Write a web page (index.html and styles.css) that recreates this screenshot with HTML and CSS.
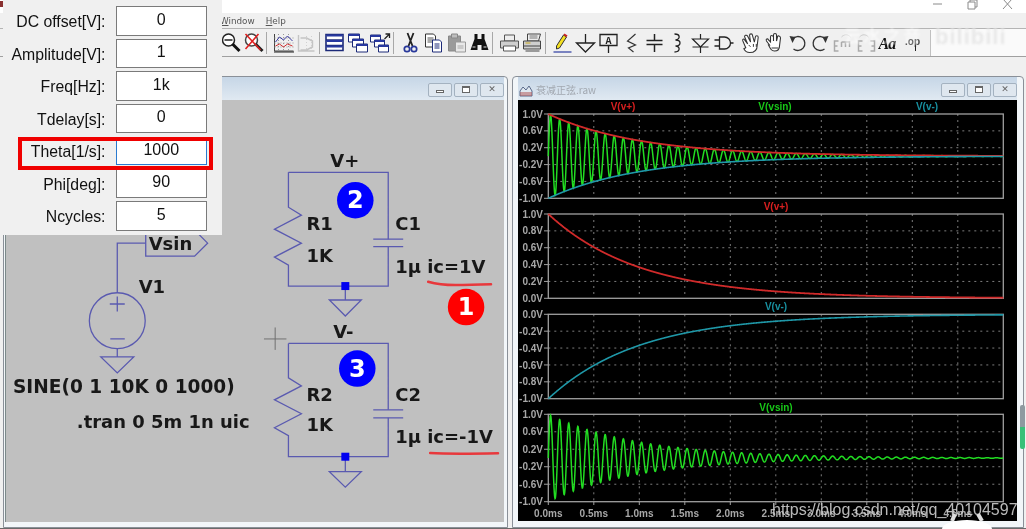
FILE: index.html
```html
<!DOCTYPE html>
<html lang="en">
<head>
<meta charset="utf-8">
<title>LTspice</title>
<link rel="stylesheet" href="styles.css">
</head>
<body>
<div class="app">
  <header class="titlebar">
    <span class="app-mark"></span>
    <div class="caption-buttons">
      <svg class="cap-btn" viewBox="0 0 12 12"><path d="M2 6h9"/></svg>
      <svg class="cap-btn" viewBox="0 0 12 12"><path d="M2 4h7v7H2zM4 4V2h7v7H9"/></svg>
      <svg class="cap-btn" viewBox="0 0 12 12"><path d="M2 1l9 10M11 1L2 11"/></svg>
    </div>
  </header>
  <nav class="menubar"><span class="menu-item"><u>W</u>indow</span><span class="menu-item"><u>H</u>elp</span></nav>
  <div class="toolbar">
    <svg class="ti" viewBox="0 0 22 22"><circle cx="9" cy="8" r="6" fill="#fff" stroke="#222" stroke-width="1.5"/><path d="M5 8h8" stroke="#222" stroke-width="1.5"/><path d="M13 12l7 7" stroke="#111" stroke-width="3"/></svg>
    <svg class="ti" viewBox="0 0 22 22"><circle cx="9" cy="8" r="6" fill="#fff" stroke="#444" stroke-width="1.5"/><path d="M13 12l7 7" stroke="#222" stroke-width="3"/><path d="M3 2l15 16M16 2L3 17" stroke="#e02020" stroke-width="1.6"/></svg>
    <span class="tb-sep wide"></span>
    <svg class="ti" viewBox="0 0 22 22"><path d="M2 2v17h19" stroke="#444" fill="none"/><path d="M2 6h19M2 11h19M2 15h19M6 2v17M11 2v17M16 2v17" stroke="#999" stroke-dasharray="1 2"/><path d="M3 10l4-5 4 3 4-4 5 5" stroke="#3a3aa0" fill="none"/><path d="M3 14l4-2 4 3 4-3 5 2" stroke="#d03030" fill="none"/><path d="M2 20h19" stroke="#222" stroke-dasharray="1 1" stroke-width="2"/></svg>
    <svg class="ti" viewBox="0 0 22 22"><path d="M3 3v16h16M5 6h6l6 3v6l-6 3H5" stroke="#c4c4c4" fill="none" stroke-width="1.4"/><path d="M11 4v15M16 4v15" stroke="#d0d0d0" stroke-dasharray="1 2"/></svg>
    <span class="tb-sep"></span>
    <svg class="ti" viewBox="0 0 22 22"><path d="M2.500 2.500h17v16h-17zM2.500 8h17M2.500 13.500h17" fill="#fff" stroke="#1c2a78" stroke-width="1.6"/><path d="M3 3.500h16M3 9h16M3 14.500h16" stroke="#2838a0" stroke-width="1.800"/></svg>
    <svg class="ti" viewBox="0 0 22 22"><path d="M2 2h11v8H2z" fill="#fff" stroke="#1c2a78"/><path d="M2 3h11" stroke="#2838a0" stroke-width="2"/><path d="M6 7h11v8H6z" fill="#fff" stroke="#1c2a78"/><path d="M6 8h11" stroke="#2838a0" stroke-width="2"/><path d="M10 12h11v8H10z" fill="#fff" stroke="#1c2a78"/><path d="M10 13h11" stroke="#2838a0" stroke-width="2"/></svg>
    <svg class="ti" viewBox="0 0 22 22"><path d="M1 3h10v7H1z" fill="#fff" stroke="#1c2a78"/><path d="M1 4h10" stroke="#2838a0" stroke-width="2"/><path d="M5 8h10v7H5z" fill="#fff" stroke="#1c2a78"/><path d="M5 9h10" stroke="#2838a0" stroke-width="2"/><path d="M9 13h10v7H9z" fill="#fff" stroke="#1c2a78"/><path d="M9 14h10" stroke="#2838a0" stroke-width="2"/><path d="M15 7l5-5M16 2h4v4" stroke="#222" fill="none" stroke-width="1.300"/></svg>
    <span class="tb-sep wide"></span>
    <svg class="ti" viewBox="0 0 22 22"><path d="M8 1l5 13M14 1L9 14" stroke="#222" stroke-width="1.800"/><circle cx="7.500" cy="17" r="2.700" fill="none" stroke="#28389a" stroke-width="1.700"/><circle cx="14.500" cy="17" r="2.700" fill="none" stroke="#28389a" stroke-width="1.700"/></svg>
    <svg class="ti" viewBox="0 0 22 22"><path d="M3 2h8l2 2v11H3z" fill="#fff" stroke="#333"/><path d="M5 6h6M5 8h6M5 10h6" stroke="#555"/><path d="M10 8h7l2 2v10h-9z" fill="#fff" stroke="#1c2a78"/><path d="M12 12h5M12 14h5M12 16h5" stroke="#1c2a78"/></svg>
    <svg class="ti" viewBox="0 0 22 22"><path d="M3 4h12v15H3z" fill="#9a9a9a" stroke="#888"/><path d="M6 2h6v4H6z" fill="#bdbdbd" stroke="#888"/><path d="M10 10h10v10H10z" fill="#e8e8e8" stroke="#999"/><path d="M12 14h6M12 16h6" stroke="#aaa"/></svg>
    <svg class="ti" viewBox="0 0 22 22"><path d="M6 2h3v5h4V2h3v5l4 11H13v-5H9v5H2L6 7z" fill="#111"/><path d="M4 15h3M15 15h3" stroke="#ddd"/></svg>
    <span class="tb-sep wide"></span>
    <svg class="ti" viewBox="0 0 22 22"><path d="M6 3h10v6H6z" fill="#eee" stroke="#555"/><path d="M2 9h18v7H2z" fill="#cfcfcf" stroke="#555"/><path d="M5 14h12v5H5z" fill="#fff" stroke="#555"/></svg>
    <svg class="ti" viewBox="0 0 22 22"><path d="M6 2h13l-2 7H6z" fill="#eee" stroke="#444"/><path d="M8 4h8M8 6h8" stroke="#777"/><path d="M2 9h17v8H2z" fill="#cfcfcf" stroke="#444"/><path d="M2 14h17M4 19h14" stroke="#444"/><path d="M4 11h5" stroke="#c8a820"/></svg>
    <span class="tb-sep wide"></span>
    <svg class="ti" viewBox="0 0 22 22"><path d="M5 14L12 3l3 2-7 11-3 1z" fill="#f4e020" stroke="#333"/><path d="M12 3l1-1.500 3 2-1 1.500z" fill="#d02020"/><path d="M2 20h18" stroke="#2a3aa0" stroke-width="1.200"/></svg>
    <svg class="ti" viewBox="0 0 22 22"><path d="M11 2v9M2 11h18l-9 9z" fill="none" stroke="#222" stroke-width="1.300"/></svg>
    <svg class="ti" viewBox="0 0 22 22"><path d="M2.500 2.500h17v11h-17zM11 14v7" fill="none" stroke="#222" stroke-width="1.300"/><text class="ti-a" x="11" y="12">A</text></svg>
    <svg class="ti" viewBox="0 0 22 22"><path d="M15 2L7 9l8 4-7 3 5 4" fill="none" stroke="#333" stroke-width="1.200"/></svg>
    <svg class="ti" viewBox="0 0 22 22"><path d="M11 2v6.500M3 8.500h16M3 12.500h16M11 13v7" fill="none" stroke="#222" stroke-width="1.500"/></svg>
    <svg class="ti" viewBox="0 0 22 22"><path d="M8 2c6 0 6 5 1 6 6 0 6 6 0 6 5 0 5 6-1 6" fill="none" stroke="#222" stroke-width="1.300"/></svg>
    <svg class="ti" viewBox="0 0 22 22"><path d="M11 2v5M3 7h16l-8 8zM3 15h16M11 15v6" fill="none" stroke="#222" stroke-width="1.200"/></svg>
    <svg class="ti" viewBox="0 0 22 22"><path d="M7 5h5a6 6 0 0 1 0 12H7zM2 8h5M2 14h5M18 11h3" fill="none" stroke="#222" stroke-width="1.300"/></svg>
    <svg class="ti hand-first" viewBox="0 0 24 22"><path d="M6 16L3 9c-1-2 1-3 2-1l3 4-3-7c-1-2 2-3 3-1l3 6-1-7c0-2 3-2 3 0l2 7 1-5c0-2 3-2 3 0l-1 8c0 5-3 8-8 8-3 0-5-2-6-4z" fill="#fff" stroke="#333" stroke-width="1.100"/><path d="M9 13l2 2M14 12v3M17 12v3" stroke="#333"/></svg>
    <svg class="ti" viewBox="0 0 22 22"><path d="M6 13L3 9c-1-2 1-3 2-1l2 2V5c0-2 2-2 3 0l0 4V3c0-2 3-2 3 0v6l1-4c0-2 3-1 3 1l-1 8c0 3-2 5-5 5-3 0-4-2-6-6z" fill="#fff" stroke="#333" stroke-width="1.100"/><path d="M8 16h7" stroke="#333"/></svg>
    <svg class="ti" viewBox="0 0 22 22"><path d="M6 7a7 7 0 1 1 1 10" fill="none" stroke="#333" stroke-width="1.300"/><path d="M3 4l6 1-3 6z" fill="#333"/></svg>
    <svg class="ti" viewBox="0 0 22 22"><path d="M16 7a7 7 0 1 0-1 10" fill="none" stroke="#333" stroke-width="1.300"/><path d="M19 4l-6 1 3 6z" fill="#333"/></svg>
    <svg class="ti" viewBox="0 0 22 22"><path d="M6 9H2v10h4M2 14h3M9 10v5M13 10v5M9 10h8v5" fill="none" stroke="#aaa" stroke-width="1.500"/><path d="M9 5c3-3 6-3 9 0" fill="none" stroke="#ccc"/></svg>
    <svg class="ti" viewBox="0 0 22 22"><path d="M7 9H3v10h4M3 14h3M15 9h4v10h-4M16 14h3" fill="none" stroke="#aaa" stroke-width="1.500"/><path d="M4 5c3-3 6-3 9 0" fill="none" stroke="#ccc"/></svg>
    <svg class="ti" viewBox="0 0 22 22"><text class="ti-aa" x="0" y="17">Aa</text></svg>
    <svg class="ti" viewBox="0 0 22 22"><text class="ti-op" x="11" y="13">.op</text><path d="M14 13v6" stroke="#222"/></svg>
    <span class="tb-end"></span>
  </div>

  <main class="workspace">
    <section class="window win-schematic">
      <div class="win-title">
        <div class="win-buttons">
          <span class="win-btn"><i class="g-min"></i></span>
          <span class="win-btn"><i class="g-max"></i></span>
          <span class="win-btn"><i class="g-x">&#10005;</i></span>
        </div>
      </div>
      <svg class="schematic" viewBox="5 100 499 422">
        <g class="wire">
          <path d="M288 172H388V239M388 246.500V286H288V265L274 257 301 243 274 229 301 215 288 207V172"/>
          <path d="M373 239H403M373 246.500H403"/>
          <path d="M345 286V300M329 300H361L345 316Z"/>
          <path d="M288 343.500H388V410M388 418V457H288V436L274 428 301 414 274 400 301 386 288 378V343.500"/>
          <path d="M373 410H403M373 418H403"/>
          <path d="M345 457V472M329 472H361L345 487.500Z"/>
          <path d="M145 243H116.500V292M116.500 349V357M100 357H133L116.500 373Z"/>
          <circle cx="116.500" cy="320.700" r="28"/>
          <path d="M109 304H124M116.500 296.500V311.500M109.500 339H124"/>
          <path d="M145 256V233H197L207 243 194 256Z"/>
        </g>
        <rect class="node" x="341" y="282" width="8" height="8"/>
        <rect class="node" x="341" y="453" width="8" height="8"/>
        <path class="cross" d="M263.500 339H286M274.700 327.500V350"/>
        <path class="scribble" d="M428 281.700Q440 285 455 285T491 284.300"/>
        <path class="scribble" d="M430 453.300Q450 454.500 498 453.500"/>
        <circle class="dot-red" cx="466" cy="307" r="18.300"/>
        <circle class="dot-blue" cx="355" cy="200" r="18.300"/>
        <circle class="dot-blue" cx="357" cy="368.700" r="18.300"/>
        <text class="dot-num" x="466" y="315">1</text>
        <text class="dot-num" x="355" y="208">2</text>
        <text class="dot-num" x="357" y="377">3</text>
        <text class="sch" x="330" y="167">V+</text>
        <text class="sch" x="306" y="230">R1</text>
        <text class="sch" x="306" y="262">1K</text>
        <text class="sch" x="395" y="230">C1</text>
        <text class="sch" x="395" y="272.700">1&#181; ic=1V</text>
        <text class="sch" x="333" y="338">V-</text>
        <text class="sch" x="306" y="400.700">R2</text>
        <text class="sch" x="306" y="431.700">1K</text>
        <text class="sch" x="395" y="400.700">C2</text>
        <text class="sch" x="395" y="443.300">1&#181; ic=-1V</text>
        <text class="sch" x="148" y="250">Vsin</text>
        <text class="sch" x="138" y="293">V1</text>
        <text class="sch sch-wide" x="12" y="392.700">SINE(0 1 10K 0 1000)</text>
        <text class="sch" x="76" y="428.700">.tran 0 5m 1n uic</text>
      </svg>
    </section>

    <section class="window win-plot">
      <div class="win-title">
        <svg class="plot-icon" viewBox="0 0 14 12"><path d="M1 11V6l3-4 3 3 3-4 3 5v5z" fill="#dfe8f0" stroke="#5a6a8a"/><path d="M1 8h12M1 10h12" stroke="#b05050"/></svg>
        <span class="plot-name">衰减正弦.raw</span>
        <div class="win-buttons">
          <span class="win-btn"><i class="g-min"></i></span>
          <span class="win-btn"><i class="g-max"></i></span>
          <span class="win-btn"><i class="g-x">&#10005;</i></span>
        </div>
      </div>
      <svg id="plots" class="plots" viewBox="518 100 499 421"></svg>
    </section>
  </main>

  <form class="dialog">
    <label class="field-label">DC offset[V]:</label><input class="field" value="0">
    <label class="field-label">Amplitude[V]:</label><input class="field" value="1">
    <label class="field-label">Freq[Hz]:</label><input class="field" value="1k">
    <label class="field-label">Tdelay[s]:</label><input class="field" value="0">
    <label class="field-label">Theta[1/s]:</label><input class="field focused" value="1000">
    <label class="field-label">Phi[deg]:</label><input class="field" value="90">
    <label class="field-label">Ncycles:</label><input class="field" value="5">
    <div class="highlight"></div>
  </form>

  <div class="mark-left">云水之音</div>
  <div class="mark-right">bilibili</div>
  <div class="mark-url">https://blog.csdn.net/qq_40104597</div>
  <svg class="mark-bubble" viewBox="0 0 50 16"><path d="M10 8L13 1M40 8L36 1" stroke="#ddd" stroke-width="4"/><ellipse cx="25" cy="16" rx="25" ry="9" fill="#fff"/></svg>
  <div class="side-strip"></div>
</div>
<script src="script.js"></script>
</body>
</html>
```
FILE: styles.css
```css
* { box-sizing: border-box; }
html, body { margin: 0; height: 100%; overflow: hidden; background: #f0f0f0; }
.app {
  position: relative;
  display: flex;
  flex-direction: column;
  width: 1026px;
  height: 529px;
  overflow: hidden;
  font-family: "Liberation Sans", Arial, sans-serif;
  filter: blur(0.4px);
}
.titlebar { position: relative; height: 13px; background: #fff; }
.app-mark { position: absolute; left: 0; top: 1px; width: 4px; height: 6px; background: #8a3030; }
.caption-buttons { position: absolute; right: 13px; top: -2px; display: flex; gap: 23px; }
.cap-btn { width: 12px; height: 12px; fill: none; stroke: #8a8a8a; stroke-width: 1; }
.menubar {
  display: flex;
  gap: 11px;
  height: 16px;
  padding: 1px 0 0 220px;
  background: #f0f0f0;
  border-bottom: 1px solid #b4b4b4;
  font-family: "DejaVu Sans", sans-serif;
  font-size: 8.800px;
  line-height: 14px;
  color: #555;
}
.toolbar {
  display: flex;
  align-items: center;
  height: 28px;
  padding-left: 219px;
  background: linear-gradient(to right, #f0f0f0 930px, #fafafa 930px);
  border-bottom: 1px solid #a0a0a0;
}
.ti { flex: none; width: 23px; height: 22px; }
.tb-sep { flex: none; width: 1px; height: 22px; margin: 0 3px 0 1px; background: #a8a8a8; }
.tb-sep.wide { margin: 0 5px 0 1px; }
.hand-first { margin-left: 5px; }
.tb-end { flex: none; width: 1px; height: 26px; margin-left: 6px; background: #c0c0c0; }
.ti-a { font: bold 10px "Liberation Mono", monospace; text-anchor: middle; fill: #222; }
.ti-aa { font: italic bold 16px "Liberation Serif", serif; fill: #111; letter-spacing: -1px; }
.ti-op { font: bold 10px "Liberation Sans", sans-serif; text-anchor: middle; fill: #333; }

.workspace {
  flex: 1;
  display: flex;
  gap: 4px;
  padding: 19px 2px 0 3px;
  background: #f0f0f0;
  min-height: 0;
  border-bottom: 1px solid #6a6a6a;
}
.window {
  display: flex;
  flex-direction: column;
  background: #f2f6f9;
  border: 1px solid #8a9098;
  border-radius: 4px 4px 0 0;
  height: 452px;
}
.win-schematic { width: 505px; padding: 0 3px 5px 1px; }
.win-plot { width: 512px; padding: 0 6px 5px 5px; }
.win-title {
  display: flex;
  align-items: center;
  gap: 3px;
  flex: none;
  height: 23px;
  padding: 2px 0 0 1px;
  background: linear-gradient(to bottom, #c6d6e6, #e0e9f2);
}
.win-buttons { display: flex; gap: 2px; margin-left: auto; }
.win-btn {
  display: flex;
  align-items: center;
  justify-content: center;
  width: 24px;
  height: 14px;
  border: 1px solid #a4b2c0;
  border-radius: 2px;
  background: #dfe7ef;
}
.g-min { width: 8px; height: 3px; border: 1px solid #666; background: #fff; margin-top: 3px; }
.g-max { width: 8px; height: 7px; border: 1px solid #666; border-top-width: 2px; background: #fff; }
.g-x { font: normal 9px "DejaVu Sans", sans-serif; line-height: 9px; color: #666; }
.plot-icon { width: 14px; height: 12px; margin-top: 2px; }
.plot-name { font: 10px "Noto Sans CJK SC", "Liberation Sans", sans-serif; color: #a2a8b0; line-height: 18px; }

.schematic { display: block; width: 499px; height: 422px; background: #c0c0c0; border-left: 1px solid #7c8a8a; }
.wire, .wire path, .wire circle { fill: none; stroke: #5a5ab0; stroke-width: 1.300; }
.node { fill: #0000f0; }
.cross { fill: none; stroke: #707070; stroke-width: 1; }
.scribble { fill: none; stroke: #e8383c; stroke-width: 2.500; stroke-linecap: round; }
.dot-red { fill: #ff0000; }
.dot-blue { fill: #0000ff; }
.dot-num { font: bold 24px "DejaVu Sans", sans-serif; fill: #fff; text-anchor: middle; }
.sch { font: bold 18px "DejaVu Sans", sans-serif; fill: #181818; }
.sch-wide { font-size: 18.600px; }

.plots { display: block; width: 499px; height: 421px; background: #000; }
.p-frame { fill: none; stroke: #a0a0a0; stroke-width: 1.300; }
.p-grid { fill: none; stroke: #7c7c7c; stroke-width: 1; stroke-dasharray: 2 4; }
.p-tick { fill: none; stroke: #a0a0a0; stroke-width: 1; }
.p-lab { font: bold 10px "Liberation Sans", sans-serif; fill: #a8a8a8; }
.p-lab-y { text-anchor: end; }
.p-lab-x { text-anchor: middle; }
.p-trace-lab { font: bold 10px "Liberation Sans", sans-serif; text-anchor: middle; }
.c-red { stroke: #d02a2a; fill: none; stroke-width: 1.800; }
.c-green { stroke: #22dd22; fill: none; stroke-width: 1.500; }
.c-teal { stroke: #1f98a8; fill: none; stroke-width: 1.600; }
.t-red { fill: #d82020; }
.t-green { fill: #18c818; }
.t-teal { fill: #1890a0; }

.dialog {
  position: absolute;
  left: 3px;
  top: 0;
  display: grid;
  grid-template-columns: 102.500px 91.500px;
  grid-auto-rows: 29.500px;
  column-gap: 10px;
  row-gap: 3px;
  align-content: start;
  width: 219px;
  height: 235px;
  padding: 6px 0 0 0;
  background: #f0f0f0;
}
.field-label { font-size: 15.800px; line-height: 31px; text-align: right; color: #111; white-space: nowrap; }
.field {
  width: 91.500px;
  height: 29.500px;
  padding: 0 0 2px;
  border: 1px solid #7a7a7a;
  border-radius: 0;
  background: #fff;
  font: 16px "Liberation Sans", Arial, sans-serif;
  color: #111;
  text-align: center;
  outline: none;
}
.focused { height: 26px; margin-top: 2.500px; padding: 0 0 3px; border-color: #2a7ad0; }
.highlight {
  position: absolute;
  left: 14.500px;
  top: 136.500px;
  width: 195.500px;
  height: 33px;
  border: 4px solid #f00000;
  pointer-events: none;
}
.mark-left {
  position: absolute;
  left: 843px;
  top: 22px;
  font: 18px "Noto Sans CJK SC", sans-serif;
  letter-spacing: 2px;
  color: rgba(255, 255, 255, 0.75);
  filter: blur(1px);
}
.mark-right {
  position: absolute;
  left: 935px;
  top: 24px;
  font: bold 22px "Liberation Sans", sans-serif;
  letter-spacing: 1px;
  color: #e8e8e8;
  filter: blur(1.200px);
}
.mark-url {
  position: absolute;
  left: 772px;
  top: 499px;
  font-size: 16px;
  line-height: 22px;
  color: rgba(205, 205, 205, 0.9);
  white-space: nowrap;
}
.mark-bubble { position: absolute; left: 942px; top: 513px; width: 50px; height: 16px; }
.side-strip {
  position: absolute;
  left: 1020px;
  top: 405px;
  width: 5px;
  height: 44px;
  border-radius: 2px;
  background: linear-gradient(to bottom, #8e9aa0 50%, #38c078 50%);
}
```
FILE: script.js
```javascript
(function () {
  var NS = 'http://www.w3.org/2000/svg';
  var svg = document.getElementById('plots');
  var X0 = 548.3, X1 = 1003.3, MS = 91;

  function el(name, cls, attrs, text) {
    var e = document.createElementNS(NS, name);
    e.setAttribute('class', cls);
    for (var k in attrs) e.setAttribute(k, attrs[k]);
    if (text) e.textContent = text;
    svg.appendChild(e);
    return e;
  }
  var red = function (t) { return Math.exp(-t); };
  var teal = function (t) { return -Math.exp(-t); };
  var green = function (t) { return Math.exp(-t) * Math.sin(2 * Math.PI * 10 * t); };

  function trace(fn, top, h, vmax, vmin, cls) {
    var pts = [];
    for (var x = X0; x <= X1; x += 0.25) {
      var t = (x - X0) / MS;
      var y = top + (vmax - fn(t)) / (vmax - vmin) * h;
      pts.push(x.toFixed(2) + ',' + y.toFixed(2));
    }
    el('polyline', cls, { points: pts.join(' ') });
  }

  function frame(top, h, labels) {
    var d = '';
    var i, y;
    for (i = 1; i < 10; i++) {
      var gx = X0 + 45.5 * i;
      d += 'M' + gx + ' ' + top + 'V' + (top + h);
    }
    var step = h / (labels.length - 1);
    for (i = 1; i < labels.length - 1; i++) {
      y = top + step * i;
      d += 'M' + X0 + ' ' + y + 'H' + X1;
    }
    el('path', 'p-grid', { d: d });
    var ticks = '';
    labels.forEach(function (label, idx) {
      y = top + step * idx;
      ticks += 'M544 ' + y + 'H' + X0;
      el('text', 'p-lab p-lab-y', { x: 543, y: y + 3.6 }, label);
    });
    el('path', 'p-tick', { d: ticks });
    el('rect', 'p-frame', { x: X0, y: top, width: X1 - X0, height: h });
  }

  var sym = ['1.0V', '0.6V', '0.2V', '-0.2V', '-0.6V', '-1.0V'];

  frame(114, 84.3, sym);
  trace(green, 114, 84.3, 1, -1, 'c-green');
  trace(red, 114, 84.3, 1, -1, 'c-red');
  trace(teal, 114, 84.3, 1, -1, 'c-teal');
  el('text', 'p-trace-lab t-red', { x: 623, y: 110 }, 'V(v+)');
  el('text', 'p-trace-lab t-green', { x: 775, y: 110 }, 'V(vsin)');
  el('text', 'p-trace-lab t-teal', { x: 927, y: 110 }, 'V(v-)');

  frame(214, 84.3, ['1.0V', '0.8V', '0.6V', '0.4V', '0.2V', '0.0V']);
  trace(red, 214, 84.3, 1, 0, 'c-red');
  el('text', 'p-trace-lab t-red', { x: 776, y: 210 }, 'V(v+)');

  frame(314.3, 84.4, ['0.0V', '-0.2V', '-0.4V', '-0.6V', '-0.8V', '-1.0V']);
  trace(teal, 314.3, 84.4, 0, -1, 'c-teal');
  el('text', 'p-trace-lab t-teal', { x: 776, y: 310 }, 'V(v-)');

  frame(414.3, 87.4, sym);
  trace(green, 414.3, 87.4, 1, -1, 'c-green');
  el('text', 'p-trace-lab t-green', { x: 776, y: 411 }, 'V(vsin)');

  for (var i = 0; i < 10; i++) {
    var x = X0 + 45.5 * i;
    el('path', 'p-tick', { d: 'M' + x + ' 501.7V505' });
    el('text', 'p-lab p-lab-x', { x: x, y: 517 }, (i * 0.5).toFixed(1) + 'ms');
  }
})();
```
